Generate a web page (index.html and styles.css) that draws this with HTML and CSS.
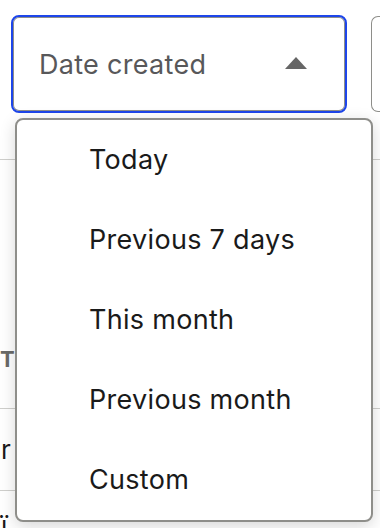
FILE: index.html
```html
<!DOCTYPE html>
<html lang="en">
<head>
<meta charset="utf-8">
<title>Date filter</title>
<link rel="stylesheet" href="styles.css">
</head>
<body>
<div class="page">
  <div class="toolbar">
    <div class="select-wrap">
      <button class="select select--open" type="button">
        <span class="select__label">Date created</span>
        <span class="caret"></span>
      </button>
      <ul class="menu">
        <li class="menu__item">Today</li>
        <li class="menu__item">Previous 7 days</li>
        <li class="menu__item">This month</li>
        <li class="menu__item">Previous month</li>
        <li class="menu__item">Custom</li>
      </ul>
    </div>
    <button class="select select--other" type="button"></button>
  </div>
  <div class="table">
    <div class="table__spacer"></div>
    <div class="table__head">T</div>
    <div class="table__row">r</div>
    <div class="table__row table__row--last">ï</div>
  </div>
</div>
</body>
</html>
```

FILE: styles.css
```css
html, body {
  margin: 0;
  padding: 0;
  overflow: hidden;
  background: #ffffff;
}

body {
  font-family: Inter, "Noto Sans", "Liberation Sans", sans-serif;
}

.page {
  width: 380px;
  height: 528px;
  overflow: hidden;
  position: relative;
}

.toolbar {
  box-sizing: border-box;
  display: flex;
  align-items: center;
  gap: 24px;
  padding: 15px 0 0 11px;
  width: 380px;
}

.select-wrap {
  position: relative;
  flex: none;
}

.select {
  box-sizing: border-box;
  display: flex;
  align-items: center;
  justify-content: space-between;
  background: #ffffff;
  font-family: inherit;
  margin: 0;
  cursor: pointer;
}

.select--open {
  width: 336px;
  height: 98px;
  border: 2px solid #1d45ea;
  border-radius: 8px;
  box-shadow: inset 0 0 0 1px #8e8e8a;
  padding: 0 38px 0 26px;
}

.select__label {
  font-size: 27px;
  letter-spacing: 0.3px;
  color: #58585a;
  line-height: 1;
}

.caret {
  width: 0;
  height: 0;
  border-left: 11px solid transparent;
  border-right: 11px solid transparent;
  border-bottom: 12px solid #666666;
  margin-top: -2px;
}

.select--other {
  width: 9px;
  height: 96px;
  border: 1.5px solid #8e8e8a;
  border-right: 0;
  border-radius: 7px 0 0 7px;
  flex: none;
}

.menu {
  position: absolute;
  top: 103px;
  left: 4px;
  z-index: 2;
  box-sizing: border-box;
  width: 358px;
  margin: 0;
  padding: 0;
  list-style: none;
  background: #ffffff;
  border: 2px solid #8e8e8a;
  border-radius: 8px;
  box-shadow: 0 4px 16px rgba(0, 0, 0, 0.16);
}

.menu__item {
  height: 80px;
  line-height: 80px;
  padding-left: 72px;
  font-size: 27px;
  letter-spacing: 0.3px;
  color: #1a1a1a;
}

.table {
  margin-top: 46px;
  border-top: 1px solid #cfcfcc;
}

.table__spacer {
  height: 150px;
}

.table__head {
  height: 98px;
  line-height: 98px;
  font-size: 22px;
  font-weight: 700;
  color: #6a6a68;
  border-bottom: 1px solid #cfcfcc;
}

.table__row {
  height: 81px;
  line-height: 81px;
  font-size: 26px;
  color: #1a1a1a;
  border-bottom: 1px solid #cfcfcc;
  padding-left: 1px;
}

.table__row--last {
  height: 40px;
  line-height: 70px;
  overflow: hidden;
  border-bottom: 0;
}
```
